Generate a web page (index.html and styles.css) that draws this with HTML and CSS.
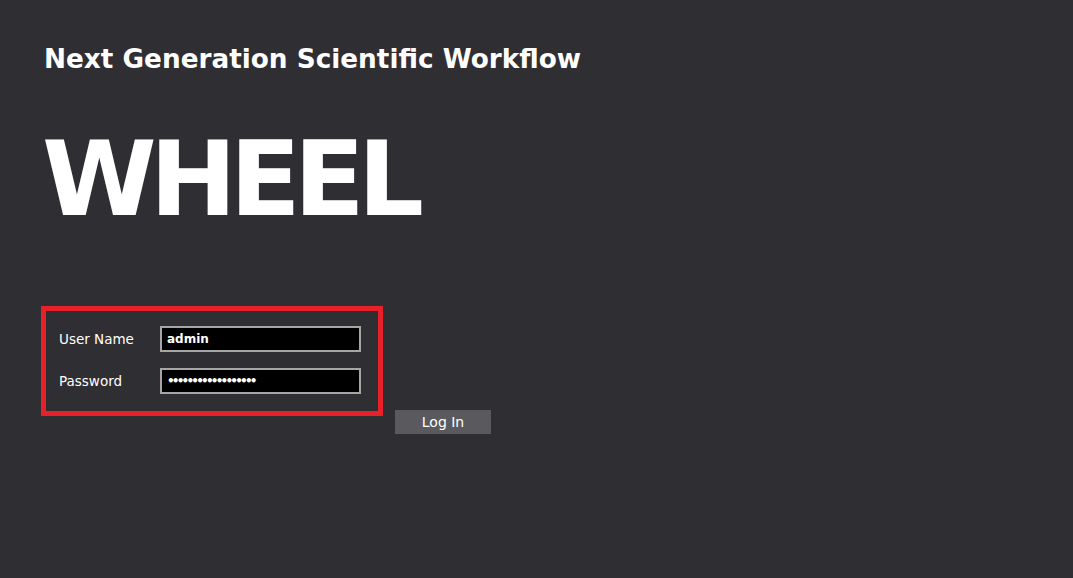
FILE: index.html
```html
<!DOCTYPE html>
<html>
<head>
<meta charset="utf-8">
<link rel="stylesheet" href="styles.css">
</head>
<body>
<div class="page">
  <h2 class="subtitle">Next Generation Scientific Workflow</h2>
  <h1 class="logo">WHEEL</h1>
  <div class="login">
    <div class="frame">
      <div class="row">
        <label class="label">User Name</label>
        <input class="field" type="text" value="admin">
      </div>
      <div class="row">
        <label class="label">Password</label>
        <input class="field pass" type="password" value="aaaaaaaaaaaaaaaaaa">
      </div>
    </div>
    <button class="btn">Log In</button>
  </div>
</div>
</body>
</html>
```
FILE: styles.css
```css
html, body {
  margin: 0;
  padding: 0;
  background: #2f2e33;
  height: 100%;
}
.page {
  padding: 40px 0 0 44px;
  font-family: "DejaVu Sans", Verdana, sans-serif;
  color: #ffffff;
}
.subtitle {
  margin: 0;
  font-size: 26.3px;
  font-weight: bold;
  line-height: 38px;
}
.logo {
  margin: 41px 0 0 -2px;
  font-size: 104px;
  font-weight: bold;
  line-height: 120px;
  letter-spacing: -7px;
}
.login {
  margin: 67px 0 0 -3px;
  display: flex;
  align-items: flex-start;
}
.frame {
  border: 5px solid #e8202a;
  padding: 15px 0 17px 13px;
  box-sizing: content-box;
  display: flex;
  flex-direction: column;
  gap: 16px;
  width: 319px;
}
.row {
  display: flex;
  align-items: center;
}
.label {
  width: 101px;
  font-size: 13.5px;
  color: #ffffff;
}
.field {
  width: 201px;
  height: 26px;
  box-sizing: border-box;
  border: 2px solid #a6a6a6;
  background: #000000;
  color: #ffffff;
  font-family: "DejaVu Sans", Verdana, sans-serif;
  font-size: 12px;
  font-weight: bold;
  padding: 0 5px;
  outline: none;
}
.pass {
  letter-spacing: -2.8px;
}
.btn {
  margin: 104px 0 0 12px;
  width: 96px;
  height: 24px;
  border: none;
  background: #5a595e;
  color: #ffffff;
  font-family: "DejaVu Sans", Verdana, sans-serif;
  font-size: 14px;
  padding: 0;
}
```
